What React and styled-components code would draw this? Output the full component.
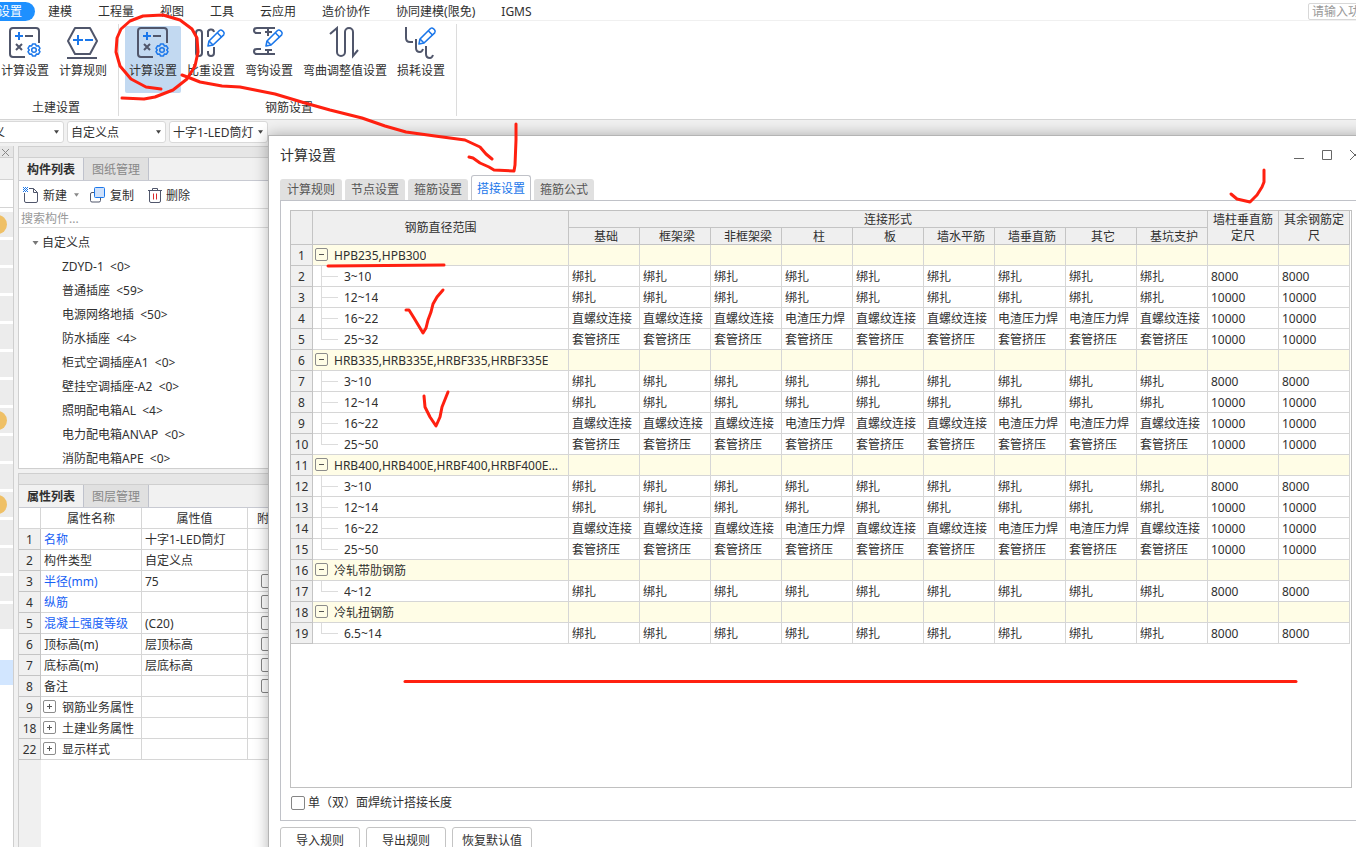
import React, { useState } from 'react'
import styled, { createGlobalStyle } from 'styled-components'

const menus = ['建模', '工程量', '视图', '工具', '云应用', '造价协作', '协同建模(限免)', 'IGMS'];

const components = [
  'ZDYD-1  <0>',
  '普通插座  <59>',
  '电源网络地插  <50>',
  '防水插座  <4>',
  '柜式空调插座A1  <0>',
  '壁挂空调插座-A2  <0>',
  '照明配电箱AL  <4>',
  '电力配电箱AN\\AP  <0>',
  '消防配电箱APE  <0>',
];

const properties = [
  { no: 1, name: '名称', value: '十字1-LED筒灯', blue: true },
  { no: 2, name: '构件类型', value: '自定义点' },
  { no: 3, name: '半径(mm)', value: '75', blue: true, check: true },
  { no: 4, name: '纵筋', value: '', blue: true, check: true },
  { no: 5, name: '混凝土强度等级', value: '(C20)', blue: true, check: true },
  { no: 6, name: '顶标高(m)', value: '层顶标高', check: true },
  { no: 7, name: '底标高(m)', value: '层底标高', check: true },
  { no: 8, name: '备注', value: '', check: true },
  { no: 9, name: '钢筋业务属性', value: '', group: true },
  { no: 18, name: '土建业务属性', value: '', group: true },
  { no: 22, name: '显示样式', value: '', group: true },
];

const joints = ['基础', '框架梁', '非框架梁', '柱', '板', '墙水平筋', '墙垂直筋', '其它', '基坑支护'];

const tie = joints.map(() => '绑扎');
const press = joints.map(() => '套管挤压');
const thread = joints.map((j) =>
  ['柱', '墙垂直筋', '其它'].includes(j) ? '电渣压力焊' : '直螺纹连接'
);

const steelRows = (last) => [
  { name: '3~10', cells: tie, size: '8000' },
  { name: '12~14', cells: tie, size: '10000' },
  { name: '16~22', cells: thread, size: '10000' },
  { name: last, cells: press, size: '10000', last: true },
];

const rows = [
  { name: 'HPB235,HPB300', group: true },
  ...steelRows('25~32'),
  { name: 'HRB335,HRB335E,HRBF335,HRBF335E', group: true },
  ...steelRows('25~50'),
  { name: 'HRB400,HRB400E,HRBF400,HRBF400E...', group: true },
  ...steelRows('25~50'),
  { name: '冷轧带肋钢筋', group: true },
  { name: '4~12', cells: tie, size: '8000', last: true },
  { name: '冷轧扭钢筋', group: true },
  { name: '6.5~14', cells: tie, size: '8000', last: true },
];

const dialogTabs = ['计算规则', '节点设置', '箍筋设置', '搭接设置', '箍筋公式'];

const dockCells = Array.from({ length: 15 }, (_, i) => i);

const DARK = '#50566b';
const BLUE = '#1b77ea';

function RibbonIcon({ children }) {
  return (
    <svg width="34" height="34" viewBox="0 0 34 34" fill="none" stroke={DARK} strokeWidth="2">
      {children}
    </svg>
  )
}

function Pencil({ x, y }) {
  return (
    <g transform={`translate(${x} ${y})`} stroke={BLUE} strokeWidth="1.6" strokeLinejoin="round">
      <path d="M1 17l1-5L12.500 1.500q1.500-1.200 3 .3l1 1q1.400 1.500.2 3L6 16z" />
      <path d="M10.500 4l4 4M2 12l4 4" />
    </g>
  )
}

function CalcIcon() {
  return (
    <RibbonIcon>
      <path d="M31 17V5a3 3 0 0 0-3-3H5a3 3 0 0 0-3 3v23a3 3 0 0 0 3 3h12" />
      <path d="M7 10h8M11 6v8" stroke={BLUE} />
      <path d="M17 10h8M8 18l6 6M14 18l-6 6" />
      <g stroke={BLUE} strokeWidth="1.500">
        <path d="M24.500 18h3l.8 2 2.200-.2 1.500 2.600-1.300 1.600 1.300 1.600-1.500 2.600-2.200-.2-.8 2h-3l-.8-2-2.200.2-1.500-2.600 1.300-1.600-1.300-1.600 1.500-2.600 2.200.2z" strokeLinejoin="round" />
        <circle cx="26" cy="24" r="2.300" />
      </g>
    </RibbonIcon>
  )
}

function RuleIcon() {
  return (
    <RibbonIcon>
      <path d="M9 2h15l7 13-7 13H9L2 15z" strokeLinejoin="round" />
      <path d="M1 32h30" />
      <path d="M7 14h10M12 9v10M19 14h8" stroke={BLUE} />
    </RibbonIcon>
  )
}

function WeightIcon() {
  return (
    <RibbonIcon>
      <rect x="2" y="4" width="6" height="26" rx="3" />
      <path d="M14 11V7a3 3 0 0 1 6-1M14 25v2a3 3 0 0 0 6 0v-6" />
      <Pencil x={13} y={3} />
    </RibbonIcon>
  )
}

function HookIcon() {
  return (
    <RibbonIcon>
      <path d="M23 2H5q-3 0-3 2.500T5 7h4M16 2v8M13 6h7" />
      <path d="M23 28H5q-3 0-3-2.500T5 23h4M16 28v-4M13 24h7" />
      <Pencil x={13} y={3} />
    </RibbonIcon>
  )
}

function BendIcon() {
  return (
    <RibbonIcon>
      <path d="M2 8l7-6v24a4 4 0 0 0 8 0V6a4 4 0 0 1 8 0v24l5-6" />
    </RibbonIcon>
  )
}

function LossIcon() {
  return (
    <RibbonIcon>
      <path d="M2 1v11q0 4 4 4h3M12 13v9q0 4 4 4 2 0 3-3M22 20v8q0 4 4 4 2 0 3-3" />
      <Pencil x={14} y={1} />
    </RibbonIcon>
  )
}

function NewIcon() {
  return (
    <svg width="16" height="16" viewBox="0 0 16 16" fill="none" stroke={DARK}>
      <path d="M1.500 6v8q0 1.500 1.500 1.500h10q1.500 0 1.500-1.500V5.500l-4-4H6M10.500 1.500v4h4" />
      <path d="M0 .5h5M0 2.500h5M0 4.500h5" stroke={BLUE} strokeDasharray="1 1" />
      <path d="M1 1.500h4M1 3.500h4" stroke={BLUE} strokeDasharray="1 1" />
    </svg>
  )
}

function CopyIcon() {
  return (
    <svg width="16" height="16" viewBox="0 0 16 16" fill="none">
      <path d="M5 5.500H2Q.5 5.500.5 7v6.500Q.5 15 2 15h7q1.500 0 1.500-1.500V11" stroke={DARK} />
      <rect x="4.500" y=".5" width="10" height="10" rx="1" fill="#cfe1fb" stroke={BLUE} />
    </svg>
  )
}

function TrashIcon() {
  return (
    <svg width="14" height="16" viewBox="0 0 14 16" fill="none" stroke={DARK}>
      <path d="M0 3.500h14M4.500 3V1.500h5V3M1.500 4v10q0 1.500 1.500 1.500h8q1.500 0 1.500-1.500V4" />
      <path d="M5.500 6.500v6M8.500 6.500v6" stroke="#d92b2b" />
    </svg>
  )
}

function Caret({ size = 5, color = '#444' }) {
  return (
    <svg width={size} height="4" viewBox="0 0 6 4">
      <path d="M0 0h6L3 4z" fill={color} />
    </svg>
  )
}

const buildTools = [
  { label: '计算设置', Icon: CalcIcon },
  { label: '计算规则', Icon: RuleIcon },
];

const steelTools = [
  { label: '计算设置', Icon: CalcIcon, active: true },
  { label: '比重设置', Icon: WeightIcon },
  { label: '弯钩设置', Icon: HookIcon },
  { label: '弯曲调整值设置', Icon: BendIcon },
  { label: '损耗设置', Icon: LossIcon },
];

function ToolGroup({ title, tools }) {
  return (
    <Group>
      <GroupTools>
        {tools.map(({ label, Icon, active }) => (
          <ToolButton key={label} $active={active}>
            <Icon />
            {label}
          </ToolButton>
        ))}
      </GroupTools>
      <GroupTitle>{title}</GroupTitle>
    </Group>
  )
}

function Combo({ label, value }) {
  return (
    <ComboBox>
      <select aria-label={label} defaultValue={value}>
        <option>{value}</option>
      </select>
      <Caret />
    </ComboBox>
  )
}

function Dock() {
  return (
    <DockBar>
      <DockHead>
        <button aria-label="关闭">
          <svg width="9" height="9" viewBox="0 0 9 9" stroke="#888"><path d="M1 1l7 7M8 1L1 8" /></svg>
        </button>
      </DockHead>
      <DockTitle />
      <DockBlank />
      <DockList>
        {dockCells.map((i) => (
          <DockCell key={i}>{[0, 7, 10].includes(i) && <Dot />}</DockCell>
        ))}
      </DockList>
      <DockSelected />
    </DockBar>
  )
}

function ComponentPanel() {
  return (
    <Panel>
      <PanelHead />
      <PanelTabs>
        <PanelTab $active>构件列表</PanelTab>
        <PanelTab>图纸管理</PanelTab>
      </PanelTabs>
      <Tools>
        <button><NewIcon /><span>新建</span></button>
        <MoreButton aria-label="更多"><Caret color="#888" /></MoreButton>
        <button><CopyIcon /><span>复制</span></button>
        <button><TrashIcon /><span>删除</span></button>
      </Tools>
      <Search aria-label="搜索构件" placeholder="搜索构件..." />
      <Tree>
        <TreeRoot><Caret size={7} color="#777" />自定义点</TreeRoot>
        {components.map((c) => <TreeItem key={c}>{c}</TreeItem>)}
      </Tree>
    </Panel>
  )
}

function PropertyPanel() {
  return (
    <Panel $grow>
      <PanelHead />
      <PanelTabs>
        <PanelTab $active>属性列表</PanelTab>
        <PanelTab>图层管理</PanelTab>
      </PanelTabs>
      <PropertyTable>
        <colgroup>
          <col width="22" /><col width="101" /><col width="106" /><col />
        </colgroup>
        <thead>
          <tr><th /><th>属性名称</th><th>属性值</th><th>附加</th></tr>
        </thead>
        <tbody>
          {properties.map((p) => (
            <tr key={p.no}>
              <NumberCell>{p.no}</NumberCell>
              <NameCell $blue={p.blue}>
                <NameLine>
                  {p.group && <Toggle aria-label="展开"><Sign plus /></Toggle>}
                  <NameText>{p.name}</NameText>
                </NameLine>
              </NameCell>
              <td>{p.value}</td>
              <CheckCell>{p.check && <Check aria-label={p.name} />}</CheckCell>
            </tr>
          ))}
        </tbody>
      </PropertyTable>
      <Gutter />
    </Panel>
  )
}

function Sign({ plus }) {
  return (
    <svg width="7" height="7" viewBox="0 0 7 7" stroke="#555">
      <path d={plus ? 'M1 3.500h5M3.500 1v5' : 'M1 3.500h5'} />
    </svg>
  )
}

function SteelTable() {
  return (
    <Grid>
      <colgroup>
        <col width="22" />
        <col />
        {joints.map((j) => <col key={j} width="71" />)}
        <col width="71" />
        <col width="71" />
      </colgroup>
      <thead>
        <tr>
          <th rowSpan={2} />
          <th rowSpan={2}>钢筋直径范围</th>
          <th colSpan={joints.length}>连接形式</th>
          <th rowSpan={2}>墙柱垂直筋定尺</th>
          <th rowSpan={2}>其余钢筋定尺</th>
        </tr>
        <JointRow>{joints.map((j) => <th key={j}>{j}</th>)}</JointRow>
      </thead>
      <tbody>
        {rows.map((row, i) => (
          <GridRow key={i} $group={row.group}>
            <NumberCell>{i + 1}</NumberCell>
            <NameCell>
              <NameLine>
                {row.group
                  ? <Toggle aria-label="折叠"><Sign /></Toggle>
                  : <Branch $last={row.last} />}
                <NameText>{row.name}</NameText>
              </NameLine>
            </NameCell>
            {joints.map((j, n) => <td key={j}>{row.cells?.[n]}</td>)}
            <td>{row.size}</td>
            <td>{row.size}</td>
          </GridRow>
        ))}
      </tbody>
    </Grid>
  )
}

function SettingDialog() {
  const [tab, setTab] = useState('搭接设置');

  return (
    <Dialog role="dialog" aria-label="计算设置">
      <TitleBar>
        <h1>计算设置</h1>
        <WindowButtons>
          <button aria-label="最小化"><svg width="10" height="12" stroke="#666"><path d="M0 9.500h10" /></svg></button>
          <button aria-label="最大化"><svg width="10" height="12" stroke="#666" fill="none"><path d="M.5 1.500h9v9h-9z" /></svg></button>
          <button aria-label="关闭"><svg width="10" height="12" stroke="#666"><path d="M0 1l10 10M10 1L0 11" /></svg></button>
        </WindowButtons>
      </TitleBar>
      <DialogTabs role="tablist">
        {dialogTabs.map((t) => (
          <DialogTab key={t} role="tab" aria-selected={t === tab} $active={t === tab} onClick={() => setTab(t)}>
            {t}
          </DialogTab>
        ))}
      </DialogTabs>
      <TabPage>
        <GridBox><SteelTable /></GridBox>
        <CheckLine>
          <Check />
          <span>单（双）面焊统计搭接长度</span>
        </CheckLine>
      </TabPage>
      <DialogFooter>
        <button>导入规则</button>
        <button>导出规则</button>
        <button>恢复默认值</button>
      </DialogFooter>
    </Dialog>
  )
}

// hand drawn red pen marks over the window
function PenMarks() {
  return (
    <Marks width="1356" height="847" viewBox="0 0 1356 847">
      <path d="M161 89L146 87 131 79 120 66 116 52 117 38 121 29 130 21 143 16 163 15 180 20 192 29 197 38 198 52 195 66 187 79 173 90 155 97 144 99 122 98" />
      <path d="M182 75L190 78 200 82 222 86 240 87 255 90 275 94 305 103 330 110 362 118 385 126 406 132 435 136 465 140 480 147 486 154 492 159" />
      <path d="M469 157L473 158 480 163 489 167 494 170 514 171 515 165 516 140 516 124" />
      <path d="M1231 194L1237 199 1250 202 1257 195 1262 187 1264 182 1264 170" />
      <path d="M328 266L444 265" />
      <path d="M406 310L409 310 414 318 420 328 423 333 426 328 428 320 431 312 433 304 437 297 443 290" />
      <path d="M424 396L425 407 430 417 436 426 440 417 442 407 448 392" />
      <path d="M405 681.500H1296" />
    </Marks>
  )
}

function App() {
  return (
    <Window>
      <GlobalStyle />
      <MenuBar>
        <MenuItem $active>设置</MenuItem>
        {menus.map((m) => <MenuItem key={m}>{m}</MenuItem>)}
        <MenuSearch aria-label="功能搜索" placeholder="请输入功能名称" />
      </MenuBar>
      <Ribbon>
        <ToolGroup title="土建设置" tools={buildTools} />
        <ToolGroup title="钢筋设置" tools={steelTools} />
      </Ribbon>
      <OptionBar>
        <Combo label="构件分类" value="自定义" />
        <Combo label="构件类型" value="自定义点" />
        <Combo label="构件名称" value="十字1-LED筒灯" />
      </OptionBar>
      <Workspace>
        <Dock />
        <Panels>
          <ComponentPanel />
          <PropertyPanel />
        </Panels>
      </Workspace>
      <SettingDialog />
      <PenMarks />
    </Window>
  )
}

export default App;

const GlobalStyle = createGlobalStyle`
  * {
    box-sizing: border-box;
  }
  body {
    margin: 0;
    color: #303030;
    font: 12px/16px "Noto Sans", "Noto Sans CJK SC", sans-serif;
  }
  button, input, select {
    font: inherit;
    color: inherit;
  }
  button {
    border: none;
    background: none;
    padding: 0;
    white-space: nowrap;
  }
  svg {
    display: block;
    flex-shrink: 0;
  }
`;

const Window = styled.div`
  position: relative;
  display: flex;
  flex-direction: column;
  height: 100vh;
  overflow: hidden;
  background: #f1f1f1;
`;

const MenuBar = styled.nav`
  display: flex;
  align-items: center;
  height: 21px;
  padding-top: 2px;
  margin-left: -15px;
  background: #fff;
  border-bottom: 1px solid #f0f0f0;
`;

const MenuItem = styled.button`
  height: 19px;
  padding: 2px 13px 0;
  border-radius: 10px;
  color: ${(p) => (p.$active ? '#fff' : '#303030')};
  background: ${(p) => (p.$active ? '#1e90ff' : 'none')};
`;

const MenuSearch = styled.input`
  width: 120px;
  height: 17px;
  margin-left: auto;
  margin-right: -72px;
  padding: 0 3px;
  border: 1px solid #d8d8d8;
  border-radius: 2px;

  &::placeholder {
    color: #999;
  }
`;

const Ribbon = styled.div`
  display: flex;
  height: 99px;
  padding: 3px 0 3px;
  margin-left: -9px;
  background: #fff;
  border-bottom: 1px solid #d4d4d4;
`;

const Group = styled.section`
  display: flex;
  flex-direction: column;
  padding: 2px 7px 0 6px;
  border-right: 1px solid #dcdcdc;
`;

const GroupTools = styled.div`
  display: flex;
  gap: 2px;
`;

const ToolButton = styled.button`
  display: flex;
  flex-direction: column;
  align-items: center;
  gap: 3px;
  height: 67px;
  padding: 0 4px;
  border-radius: 2px;
  background: ${(p) => (p.$active ? '#c2d9f1' : 'none')};
`;

const GroupTitle = styled.div`
  padding: 7px 0 0 4px;
  text-align: center;
`;

const OptionBar = styled.div`
  display: flex;
  gap: 3px;
  height: 26px;
  padding-top: 1px;
  margin-left: -35px;
`;

const ComboBox = styled.div`
  display: flex;
  align-items: center;
  width: 99px;
  height: 22px;
  padding: 0 4px 0 3px;
  background: #fff;
  border: 1px solid #d9d9d9;
  border-radius: 3px;

  > select {
    flex: 1;
    min-width: 0;
    height: 20px;
    padding: 2px 0 0;
    border: none;
    background: none;
    appearance: none;
  }
`;

const Workspace = styled.div`
  display: flex;
  flex: 1;
  min-height: 0;
`;

const DockBar = styled.aside`
  display: flex;
  flex-direction: column;
  width: 14px;
  background: #fff;
  border-right: 1px solid #cfcfcf;
`;

const DockHead = styled.div`
  height: 12px;
  padding: 2px 1px;
  background: #e6e6e6;
  border-bottom: 1px solid #cfcfcf;

  > button {
    display: block;
  }
`;

const DockTitle = styled.div`
  height: 22px;
  background: #f1f1f1;
  border-bottom: 1px solid #d4d4d4;
`;

const DockBlank = styled.div`
  height: 28px;
  border-bottom: 1px solid #d4d4d4;
`;

const DockList = styled.div`
  display: flex;
  flex-direction: column;
  gap: 3px;
  padding-top: 4px;
`;

const DockCell = styled.div`
  display: flex;
  align-items: center;
  height: 25px;
  overflow: hidden;
  background: #ececec;
`;

const Dot = styled.i`
  flex-shrink: 0;
  width: 19px;
  height: 19px;
  margin-left: -12px;
  border-radius: 50%;
  background: #efc066;
`;

const DockSelected = styled.div`
  height: 25px;
  margin-top: 31px;
  background: #d2e6ff;
`;

const Panels = styled.div`
  display: flex;
  flex-direction: column;
  gap: 4px;
  width: 274px;
  margin-left: 4px;
`;

const Panel = styled.section`
  display: flex;
  flex-direction: column;
  flex: ${(p) => (p.$grow ? '1' : 'none')};
  min-height: 0;
  overflow: hidden;
  background: #fff;
  border: 1px solid #cfcfcf;
  border-bottom-width: ${(p) => (p.$grow ? '0' : '1px')};
`;

const PanelHead = styled.div`
  flex: none;
  height: 11px;
  background: #e6e6e6;
  border-bottom: 1px solid #cfcfcf;
`;

const PanelTabs = styled.div`
  display: flex;
  flex: none;
  height: 23px;
  background: #f1f1f1;
  border-bottom: 1px solid #c8cad2;
`;

const PanelTab = styled.button`
  padding: 2px 8px 0;
  font-weight: ${(p) => (p.$active ? 'bold' : 'normal')};
  color: ${(p) => (p.$active ? '#303030' : '#888')};
  background: ${(p) => (p.$active ? '#f1f1f1' : '#e0e0e0')};
  border-right: 1px solid #bfc2cc;
`;

const Tools = styled.div`
  display: flex;
  align-items: center;
  height: 28px;
  padding-left: 4px;
  border-bottom: 1px solid #dcdcdc;

  > button {
    display: flex;
    align-items: center;
    gap: 4px;
    margin-right: 14px;
  }
  span {
    padding-top: 2px;
  }
`;

const MoreButton = styled.button`
  && {
    margin: 0 11px 0 -7px;
  }
`;

const Search = styled.input`
  height: 19px;
  padding: 0 2px;
  border: none;
  border-bottom: 1px solid #dcdcdc;

  &::placeholder {
    color: #999;
  }
`;

const Tree = styled.ul`
  height: 240px;
  margin: 0;
  padding: 3px 0 0;
  overflow: hidden;
  list-style: none;
`;

const TreeRoot = styled.li`
  display: flex;
  align-items: center;
  gap: 3px;
  height: 24px;
  padding-left: 13px;
`;

const TreeItem = styled.li`
  padding-left: 43px;
  line-height: 24px;
  white-space: pre;
`;

const Sheet = styled.table`
  width: 100%;
  table-layout: fixed;
  border-spacing: 0;

  th, td {
    padding: 2px 3px 0;
    text-align: left;
    border-right: 1px solid #d6d6d6;
    border-bottom: 1px solid #d6d6d6;
    white-space: nowrap;
    overflow: hidden;
  }
  td {
    height: 21px;
  }
  th {
    font-weight: normal;
    text-align: center;
  }
`;

const PropertyTable = styled(Sheet)`
  th {
    height: 21px;
  }
`;

const Grid = styled(Sheet)`
  th {
    height: 17px;
    padding: 1px 3px 0;
    white-space: normal;
    line-height: 15px;
    background: #efefef;
    border-color: #c4c4c4;
  }
  th[rowspan] {
    line-height: 16px;
  }
`;

const JointRow = styled.tr`
  && > th {
    padding: 1px 0 0 4px;
  }
`;

const GridRow = styled.tr`
  background: ${(p) => (p.$group ? '#fffde6' : '#fff')};
`;

const NumberCell = styled.td`
  && {
    padding: 2px 0 0;
    text-align: center;
    background: #f0f0f0;
    border-color: #c4c4c4;
  }
`;

const NameCell = styled.td`
  && {
    padding: 0 3px;
    color: ${(p) => (p.$blue ? '#1660f5' : 'inherit')};
  }
`;

const CheckCell = styled.td`
  && {
    padding: 0 0 0 13px;
  }
`;

const Gutter = styled.div`
  flex: 1;
  width: 22px;
  background: #f0f0f0;
`;

const NameLine = styled.div`
  display: flex;
  align-items: center;
  height: 20px;
`;

const NameText = styled.span`
  padding-top: 2px;
  overflow: hidden;
  text-overflow: ellipsis;
`;

const Toggle = styled.button`
  display: flex;
  flex: none;
  align-items: center;
  justify-content: center;
  width: 13px;
  height: 13px;
  margin: 0 6px 1px -1px;
  border: 1px solid #8c8c8c;
  border-radius: 2px;
`;

const Branch = styled.span`
  flex: none;
  width: 17px;
  height: 20px;
  margin: 0 6px 0 5px;
  background:
    linear-gradient(#dcdcdc, #dcdcdc) 0 0 / 1px ${(p) => (p.$last ? '50%' : '100%')} no-repeat,
    linear-gradient(#dcdcdc, #dcdcdc) 0 50% / 17px 1px no-repeat;
`;

const Check = styled.input.attrs({ type: 'checkbox' })`
  display: block;
  width: 14px;
  height: 14px;
  margin: 0;
  appearance: none;
  background: #fff;
  border: 1px solid #858585;
  border-radius: 2px;

  &:checked {
    background: #1b77ea;
  }
`;

const Dialog = styled.div`
  position: absolute;
  top: 135px;
  right: -18px;
  bottom: -17px;
  left: 268px;
  display: flex;
  flex-direction: column;
  padding: 0 11px 10px;
  background: #fff;
  border: 1px solid #b4b4b4;
  box-shadow: 0 0 14px rgba(0, 0, 0, 0.3);
`;

const TitleBar = styled.header`
  display: flex;
  align-items: center;
  justify-content: space-between;
  height: 39px;
  padding: 0 2px 2px 0;

  > h1 {
    margin: 0;
    font-size: 14px;
    font-weight: normal;
  }
`;

const WindowButtons = styled.div`
  display: flex;
  gap: 18px;
`;

const DialogTabs = styled.div`
  display: flex;
  align-items: flex-end;
  gap: 3px;
  height: 25px;
`;

const DialogTab = styled.button`
  height: ${(p) => (p.$active ? '26px' : '21px')};
  padding: ${(p) => (p.$active ? '0 5px' : '1px 6px 0')};
  margin-bottom: ${(p) => (p.$active ? '-1px' : '0')};
  color: ${(p) => (p.$active ? '#1b77ea' : '#555')};
  background: ${(p) => (p.$active ? '#fff' : '#e0e0e0')};
  border: ${(p) => (p.$active ? '1px solid #c0c2c8' : 'none')};
  border-bottom: none;
  border-radius: 3px 3px 0 0;

  &:first-child {
    padding: 1px 7px 0;
  }
`;

const TabPage = styled.div`
  display: flex;
  flex: 1;
  flex-direction: column;
  min-height: 0;
  padding: 9px 9px 0;
  border: 1px solid #c0c2c8;
`;

const GridBox = styled.div`
  flex: 1;
  min-height: 0;
  overflow: hidden;
  padding-right: 1px;
  border: 1px solid #c0c0c0;
`;

const CheckLine = styled.label`
  display: flex;
  align-items: center;
  gap: 3px;
  height: 32px;
  padding: 0 1px 3px;
`;

const DialogFooter = styled.footer`
  display: flex;
  gap: 6px;
  padding-top: 6px;

  > button {
    width: 80px;
    height: 26px;
    padding-top: 1px;
    background: #fff;
    border: 1px solid #c4c4c4;
    border-radius: 3px;
  }
`;

const Marks = styled.svg`
  position: absolute;
  top: 0;
  left: 0;
  pointer-events: none;
  fill: none;
  stroke: #ff2010;
  stroke-width: 3;
  stroke-linecap: round;
  stroke-linejoin: round;
`;
